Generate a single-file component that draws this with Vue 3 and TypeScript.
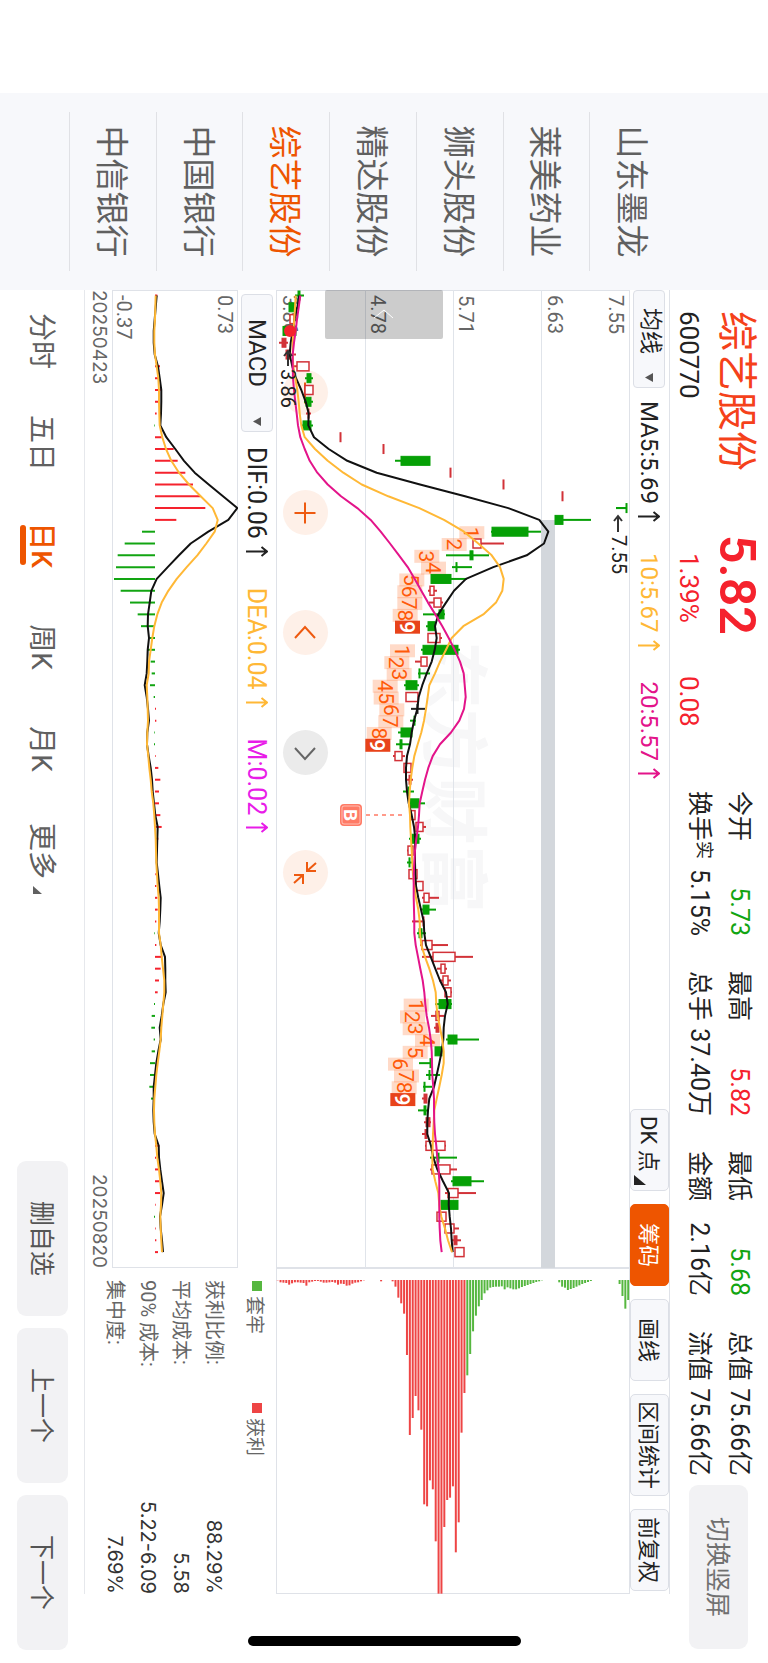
<script setup lang="ts">
import { ref } from 'vue'

type Kind = 'up' | 'solid' | 'down' | 'flat'
type Candle = [Kind, number, number, number, number]

const stocks = ['山东墨龙', '莱美药业', '狮头股份', '精达股份', '综艺股份', '中国银行', '中信银行']
const activeStock = ref('综艺股份')
const periods = ['分时', '五日', '日K', '周K', '月K', '更多']
const activePeriod = ref('日K')
const tools = ['DK 点', '筹码', '画线', '区间统计', '前复权']
const activeTool = ref('筹码')
const overlay = ref('均线')
const indicator = ref('MACD')

const quotes = [
  { label: '今开', value: '5.73', tone: 'fall' },
  { label: '最高', value: '5.82', tone: 'rise' },
  { label: '最低', value: '5.68', tone: 'fall' },
  { label: '总值', value: '75.66亿', tone: '' },
  { label: '换手', mark: '实', value: '5.15%', tone: '' },
  { label: '总手', value: '37.40万', tone: '' },
  { label: '金额', value: '2.16亿', tone: '' },
  { label: '流值', value: '75.66亿', tone: '' },
]
const averages = [
  { text: 'MA5:5.69', tone: 'ink' },
  { text: '10:5.67', tone: 'amber' },
  { text: '20:5.57', tone: 'pink' },
]
const macdValues = [
  { text: 'DIF:0.06', tone: 'ink' },
  { text: 'DEA:0.04', tone: 'amber' },
  { text: 'M:0.02', tone: 'violet' },
]
const chipStats = [
  ['获利比例:', '88.29%'],
  ['平均成本:', '5.58'],
  ['90% 成本:', '5.22-6.09'],
  ['集中度:', '7.69%'],
]
const priceLabels = [
  { text: '7.55', y: 21 },
  { text: '6.63', y: 82 },
  { text: '5.71', y: 171 },
  { text: '4.78', y: 259 },
  { text: '3.86', y: 347 },
]

// kind, body low, body high, shadow low, shadow high: heights above the price floor
const candles: Candle[] = [
  ['down', 22, 24, 19, 28], ['down', 13, 19, 13, 19], ['up', 14, 18, 14, 18], ['down', 7, 20, 7, 20],
  ['solid', 6, 10, 3, 12], ['solid', 10, 14, 9, 20], ['up', 21, 33, 18, 33], ['down', 31, 35, 29, 37],
  ['up', 29, 37, 29, 37], ['down', 30, 35, 28, 37], ['solid', 32, 33, 30, 35], ['down', 27, 35, 25, 37],
  ['solid', 64, 65, 64, 65], ['solid', 107, 108, 107, 108], ['down', 125, 154, 119, 154], ['solid', 174, 175, 174, 175],
  ['solid', 227, 228, 227, 228], ['solid', 286, 287, 286, 287], ['down', 350, 351, 340, 351], ['down', 279, 287, 279, 315],
  ['down', 216, 252, 215, 265], ['up', 197, 205, 197, 228], ['down', 194, 197, 170, 213], ['down', 180, 181, 176, 196],
  ['down', 155, 175, 155, 191], ['up', 154, 158, 152, 161], ['up', 158, 165, 153, 167], ['down', 163, 168, 147, 169],
  ['down', 152, 159, 150, 160], ['up', 152, 164, 152, 166], ['down', 147, 182, 145, 184], ['up', 145, 151, 139, 151],
  ['down', 143, 144, 142, 154], ['down', 130, 141, 128, 143], ['up', 130, 142, 130, 142], ['flat', 141, 142, 135, 149],
  ['down', 138, 139, 134, 140], ['down', 125, 136, 122, 136], ['down', 124, 126, 120, 133], ['up', 119, 126, 117, 129],
  ['up', 128, 135, 128, 135], ['solid', 133, 135, 131, 137], ['down', 132, 133, 127, 138], ['down', 134, 143, 134, 149],
  ['up', 135, 139, 135, 139], ['up', 140, 147, 140, 150], ['down', 136, 143, 133, 145], ['up', 132, 137, 131, 137],
  ['down', 133, 134, 131, 136], ['up', 133, 141, 133, 141], ['up', 140, 147, 140, 147], ['up', 148, 153, 146, 163],
  ['down', 147, 153, 145, 160], ['solid', 147, 148, 136, 148], ['down', 143, 146, 141, 150], ['up', 146, 156, 144, 172],
  ['up', 157, 179, 146, 197], ['up', 165, 169, 161, 171], ['up', 167, 172, 163, 175], ['up', 169, 175, 169, 176],
  ['down', 163, 175, 159, 176], ['up', 160, 163, 155, 168], ['solid', 160, 163, 158, 163], ['down', 172, 181, 170, 203],
  ['down', 159, 166, 159, 166], ['down', 154, 156, 143, 156], ['down', 153, 154, 150, 164], ['down', 148, 149, 147, 156],
  ['solid', 148, 151, 146, 151], ['down', 148, 150, 142, 152], ['solid', 150, 154, 148, 155], ['solid', 149, 151, 146, 152],
  ['up', 150, 169, 149, 170], ['down', 161, 163, 154, 181], ['up', 156, 174, 154, 181], ['down', 177, 195, 175, 208],
  ['up', 172, 182, 169, 200], ['down', 165, 182, 165, 182], ['up', 161, 170, 161, 170], ['up', 169, 178, 169, 183],
  ['solid', 178, 181, 176, 185], ['up', 179, 188, 179, 188],
]

// Line samples are kept on a scale of three units per pixel.
const ma5 = [
  118, 112, 104, 98, 92, 89, 97, 108, 124, 137, 146, 145, 162, 206, 262, 350, 480, 615, 745, 838, 865, 852, 800, 700, 618, 582, 558,
  535, 525, 530, 524, 515, 500, 487, 476, 472, 462, 455, 450, 441, 438, 438, 441, 446, 455, 462, 466, 465, 465, 466, 468, 475, 483,
  491, 493, 498, 512, 526, 540, 558, 563, 555, 551, 550, 545, 538, 530, 522, 508, 504, 502, 502, 513, 520, 532, 549, 567, 566, 569,
  573, 575, 578,
]
const ma10 = [
  107, 105, 103, 100, 98, 98, 100, 106, 112, 116, 119, 124, 134, 165, 203, 250, 305, 385, 478, 552, 612, 655, 695, 720, 731, 727, 708,
  670, 610, 575, 558, 540, 525, 508, 503, 498, 492, 484, 473, 463, 457, 452, 449, 447, 450, 451, 453, 455, 457, 459, 463, 468, 475,
  479, 480, 484, 495, 508, 519, 527, 529, 533, 540, 547, 551, 551, 545, 538, 530, 523, 521, 519, 518, 517, 518, 526, 535, 538, 544,
  555, 564, 576,
]
const ma20 = [
  121, 116, 111, 107, 102, 98, 98, 99, 102, 106, 110, 114, 121, 134, 149, 172, 203, 243, 292, 332, 362, 390, 417, 443, 464, 484, 504,
  526, 547, 566, 584, 600, 611, 614, 617, 612, 598, 573, 540, 518, 505, 495, 487, 479, 477, 474, 469, 465, 463, 461, 461, 461, 462,
  463, 463, 467, 474, 481, 488, 493, 496, 500, 507, 512, 515, 516, 517, 520, 522, 522, 523, 525, 529, 532, 536, 538, 538, 538, 538,
  539, 541, 545,
]
const dif = [
  468, 465, 462, 459, 459, 462, 472, 477, 482, 482, 481, 479, 497, 524, 550, 582, 624, 667, 710, 683, 623, 570, 535, 501, 468, 452, 447,
  442, 441, 445, 441, 440, 438, 432, 438, 442, 445, 440, 439, 444, 450, 454, 456, 460, 464, 471, 470, 469, 468, 472, 476, 480, 479,
  477, 474, 480, 493, 494, 494, 495, 488, 483, 477, 480, 473, 467, 463, 459, 459, 458, 459, 462, 474, 475, 479, 484, 489, 484, 478,
  480, 484, 487,
]
const dea = [
  465, 464, 463, 461, 461, 463, 468, 473, 475, 475, 476, 477, 485, 496, 512, 535, 565, 600, 636, 651, 642, 617, 590, 558, 528, 503, 483,
  470, 461, 455, 450, 445, 444, 438, 440, 441, 442, 440, 439, 443, 446, 450, 453, 458, 461, 463, 465, 466, 467, 469, 471, 474, 475,
  475, 475, 480, 483, 487, 491, 491, 488, 485, 482, 480, 476, 471, 467, 464, 461, 460, 461, 463, 467, 470, 475, 479, 482, 481, 479,
  480, 482, 484,
]
const histogram = [
  470, 463, 463, 463, 463, 463, 478, 474, 480, 473, 468, 461, 483, 519, 531, 554, 577, 600, 614, 527, 424, 372, 351, 346, 340, 360, 388,
  411, 421, 447, 442, 450, 453, 448, 459, 466, 467, 461, 460, 465, 473, 479, 475, 475, 479, 483, 473, 463, 463, 465, 467, 470, 471,
  467, 461, 467, 485, 480, 475, 471, 460, 453, 452, 459, 453, 448, 448, 446, 451, 463, 463, 463, 476, 466, 473, 476, 478, 465, 460,
  465, 467, 472,
]
const chips = [
  1, 7, 8, 9, 14, 10, 7, 7, 8, 9, 17, 7, 5, 3, 3, 5, 8, 8, 7, 6, 8, 14, 11, 12, 17, 16, 11, 8, 7, 4, 1, 0, 0, 0, 0, 0, 4, 0, 0, 0, 4,
  20, 53, 70, 101, 225, 465, 414, 348, 391, 449, 673, 679, 601, 628, 784, 941, 941, 741, 660, 653, 619, 817, 727, 458, 339, 286, 222,
  154, 107, 79, 60, 40, 31, 23, 21, 20, 20, 19, 28, 22, 25, 28, 28, 25, 21, 18, 15, 12, 9, 6, 4, 1, 0, 0, 0, 0, 0, 7, 20, 23, 30, 27,
  24, 20, 16, 12, 9, 6, 3, 0, 0, 0, 0, 0, 0, 0, 0, 0, 12, 48, 86, 60,
]
const countRuns = [
  { start: 20, levels: [598, 545, 463, 483, 418, 412, 412, 398, 405] },
  { start: 30, levels: [390, 373, 380, 338, 341, 358, 355, 320, 316] },
  { start: 60, levels: [431, 420, 428, 465, 428, 384, 402, 395, 391] },
]

const day = (i: number) => 5.5 + i * 11.81
const priceY = (v: number) => (1110 - v) / 3
const macdY = (v: number) => (712 - v) / 3
const line = (values: number[], scale: (v: number) => number) =>
  values.map((v, i) => `${day(i).toFixed(1)},${scale(v).toFixed(1)}`).join(' ')

const counts = countRuns.flatMap((run) =>
  run.levels.map((level, i) => ({ n: i + 1, x: day(run.start + i) + 1, y: priceY(level) })),
)
</script>

<template>
  <div class="screen">
    <div class="stage">
      <nav class="stocks" aria-label="自选股">
        <a
          v-for="s in stocks"
          :key="s"
          href="#"
          :class="{ active: s === activeStock }"
          @click.prevent="activeStock = s"
        >{{ s }}</a>
      </nav>

      <main class="main">
        <header class="header">
          <div class="title">
            <div class="title-row">
              <h1>综艺股份</h1>
              <strong>5.82</strong>
            </div>
            <div class="sub-row">
              <span class="code">600770</span>
              <span class="pct">1.39%</span>
              <span class="chg">0.08</span>
            </div>
          </div>
          <dl class="quotes">
            <div v-for="q in quotes" :key="q.label">
              <dt>{{ q.label }}<sup v-if="q.mark">{{ q.mark }}</sup></dt>
              <dd :class="q.tone">{{ q.value }}</dd>
            </div>
          </dl>
          <button type="button" class="flip">切换竖屏</button>
        </header>

        <section class="toolbar">
          <label class="picker">
            <select v-model="overlay" aria-label="主图指标">
              <option>均线</option>
              <option>BOLL</option>
            </select>
            <svg viewBox="0 0 9 8" width="9" height="8"><path d="M0 0H9L4.500 8Z" fill="#555" /></svg>
          </label>
          <span v-for="a in averages" :key="a.text" class="reading" :class="a.tone">
            {{ a.text }}
            <svg viewBox="0 0 11 22" width="11" height="22"><path d="M5.500 22V1M1 6.500L5.500 1L10 6.500" /></svg>
          </span>
          <div class="tools">
            <button
              v-for="t in tools"
              :key="t"
              type="button"
              :class="{ active: t === activeTool, menu: t === 'DK 点' }"
              @click="activeTool = t"
            >{{ t }}</button>
          </div>
        </section>

        <section class="panes price-panes">
          <div class="pane">
            <div class="controls">
              <button type="button" aria-label="缩小"><svg viewBox="-12 -12 24 24"><path d="M-10.500 0H10.500" /></svg></button>
              <button type="button" aria-label="放大"><svg viewBox="-12 -12 24 24"><path d="M-10.500 0H10.500M0 -10.500V10.500" /></svg></button>
              <button type="button" aria-label="左移"><svg viewBox="-12 -12 24 24"><path d="M5 -10L-6 0L5 10" /></svg></button>
              <button type="button" aria-label="右移" class="muted"><svg viewBox="-12 -12 24 24"><path d="M-5 -10L6 0L-5 10" /></svg></button>
              <button type="button" aria-label="还原"><svg viewBox="-12 -12 24 24"><path d="M-10 -11L-2 -2M-11 -2H-2V-11M10 11L2 2M11 2H2V11" /></svg></button>
            </div>
            <svg class="plot" viewBox="0 0 978 354">
              <text class="watermark" x="351" y="201">东方财富</text>
              <path class="grid" d="M0 88.500H978M0 176.500H978M0 264.500H978" />
              <rect x="230" y="75" width="748" height="14" fill="#d3d7dc" />
              <text v-for="p in priceLabels" :key="p.text" class="axis" x="5" :y="p.y">{{ p.text }}</text>

              <g v-for="c in counts" :key="c.x" class="count" :class="{ last: c.n === 9 }">
                <rect :x="c.x - 6.5" :y="c.y - 25" width="13" height="25" />
                <text :x="c.x" :y="c.y - 5">{{ c.n }}</text>
              </g>

              <g v-for="(c, i) in candles" :key="i" :class="c[0]">
                <path v-if="c[3] < c[1]" :d="`M${day(i)} ${354 - c[1]}V${354 - c[3]}`" />
                <path v-if="c[4] > c[2]" :d="`M${day(i)} ${354 - c[2]}V${354 - c[4]}`" />
                <rect :x="day(i) - 4.5" :y="354 - c[2]" width="9" :height="c[2] - c[1]" />
              </g>

              <polyline class="line ink" :points="line(ma5, priceY)" />
              <polyline class="line amber" :points="line(ma10, priceY)" />
              <polyline class="line pink" :points="line(ma20, priceY)" />

              <circle cx="41" cy="340" r="6" fill="#f5222d" />
              <path class="pointer" d="M61 342H76M66 338L61 342L66 346" />
              <text class="extreme" x="79" y="349">3.86</text>
              <path class="pointer" d="M226 12H242M231 8L226 12L231 16" />
              <text class="extreme" x="245" y="18">7.55</text>

              <path class="buy-line" d="M525 228V264" />
              <rect x="514" y="268" width="22" height="22" rx="4" fill="#ff7b66" />
              <rect x="516" y="270" width="18" height="18" rx="2" fill="none" stroke="#fff" stroke-opacity="0.5" />
              <text class="buy" x="525" y="286">B</text>

              <rect x="0" y="187" width="49" height="118" rx="2" fill="#000" fill-opacity="0.2" />
              <path d="M28 237L20 246L28 256" fill="none" stroke="#fff" />
            </svg>
          </div>
          <div class="pane chip-pane">
            <svg class="plot" viewBox="0 0 326 354">
              <rect
                v-for="(len, k) in chips"
                :key="k"
                x="12"
                :y="priceY(53 + k * 8.62) - 1"
                :width="len / 3"
                height="2"
                :fill="k < 66 ? '#ee4545' : '#56b740'"
              />
            </svg>
          </div>
        </section>

        <section class="macd-bar">
          <label class="picker wide">
            <select v-model="indicator" aria-label="副图指标">
              <option>MACD</option>
              <option>KDJ</option>
            </select>
            <svg viewBox="0 0 9 8" width="9" height="8"><path d="M0 0H9L4.500 8Z" fill="#555" /></svg>
          </label>
          <span v-for="a in macdValues" :key="a.text" class="reading" :class="a.tone">
            {{ a.text }}
            <svg viewBox="0 0 11 22" width="11" height="22"><path d="M5.500 22V1M1 6.500L5.500 1L10 6.500" /></svg>
          </span>
          <div class="legend">
            <span class="held">套牢</span>
            <span class="gain">获利</span>
          </div>
        </section>

        <section class="panes">
          <div>
            <div class="pane macd-pane">
              <svg class="plot" viewBox="0 0 978 126">
                <path
                  v-for="(v, i) in histogram"
                  :key="i"
                  :d="`M${day(i)} ${macdY(463)}V${macdY(v)}`"
                  :stroke="v > 463 ? '#f5222d' : '#12a512'"
                  stroke-width="2"
                />
                <polyline class="line ink" :points="line(dif, macdY)" />
                <polyline class="line amber" :points="line(dea, macdY)" />
                <text class="axis" x="5" y="20">0.73</text>
                <text class="axis" x="5" y="121">-0.37</text>
              </svg>
            </div>
            <div class="dates"><span>20250423</span><span>20250820</span></div>
          </div>
          <dl class="chip-stats">
            <div v-for="[label, value] in chipStats" :key="label">
              <dt>{{ label }}</dt>
              <dd>{{ value }}</dd>
            </div>
          </dl>
        </section>

        <footer class="footer">
          <div class="periods">
            <button
              v-for="p in periods"
              :key="p"
              type="button"
              :class="{ active: p === activePeriod, more: p === '更多' }"
              @click="activePeriod = p"
            >{{ p }}</button>
          </div>
          <div class="actions">
            <button type="button">删自选</button>
            <button type="button">上一个</button>
            <button type="button">下一个</button>
          </div>
        </footer>
      </main>
      <div class="home-bar"></div>
    </div>
  </div>
</template>

<style>
body {
  margin: 0;
  background: #fff;
}
</style>

<style scoped>
.screen {
  height: 100vh;
  overflow: hidden;
}
/* The whole page is laid out in landscape and turned a quarter clockwise. */
.stage {
  position: relative;
  box-sizing: border-box;
  display: grid;
  grid-template-columns: 197px 1fr;
  width: 100vh;
  height: 100vw;
  padding-left: 93px;
  transform: translateX(100vw) rotate(90deg);
  transform-origin: top left;
  font-family: Roboto, "Noto Sans CJK SC", sans-serif;
  font-size: 24px;
  color: #222;
  background: #fff;
}
.stage * {
  box-sizing: border-box;
}
button,
select {
  margin: 0;
  padding: 0;
  border: 0;
  background: none;
  font: inherit;
  color: inherit;
}
dl,
dd,
h1 {
  margin: 0;
}
svg {
  display: block;
}

.stocks {
  display: flex;
  flex-direction: column;
  padding: 92px 19px 69px;
  background: #f7f8fb;
}
.stocks a {
  flex: 1;
  display: flex;
  align-items: center;
  justify-content: center;
  padding-bottom: 2px;
  border-bottom: 1px solid #e0e1e5;
  font-size: 33px;
  color: #606060;
  text-decoration: none;
}
.stocks a.active {
  color: #ee5500;
}

.main {
  display: flex;
  flex-direction: column;
  min-width: 0;
}

.header {
  display: flex;
  height: 98px;
  padding: 0 14px 0 21px;
}
.title {
  flex: 1;
}
.title-row,
.sub-row {
  display: flex;
  align-items: center;
}
.title-row {
  height: 62px;
}
.title-row h1 {
  width: 224px;
  padding-bottom: 6px;
  font-size: 40px;
  font-weight: 400;
  color: #f5411a;
}
.title-row strong {
  font-size: 50px;
  font-weight: 600;
  color: #f5222d;
}
.sub-row {
  height: 34px;
  font-size: 26px;
  line-height: 34px;
}
.code {
  width: 242px;
}
.pct {
  width: 123px;
}
.pct,
.chg,
.rise {
  color: #f5222d;
}
.fall {
  color: #12a512;
}
.quotes {
  display: grid;
  grid-template-columns: repeat(4, 145px);
  grid-auto-rows: 40px;
  column-gap: 35px;
  padding-top: 9px;
  margin-right: 9px;
  font-size: 25px;
  line-height: 40px;
}
.quotes div {
  display: flex;
  justify-content: space-between;
}
.quotes dt {
  display: flex;
}
.quotes sup {
  font-size: 18px;
  line-height: 30px;
}
.flip {
  width: 164px;
  height: 59px;
  margin-top: 20px;
  padding-bottom: 4px;
  border-radius: 9px;
  background: #f2f2f4;
  font-size: 25px;
  color: #707070;
}

.toolbar {
  display: flex;
  align-items: center;
  height: 40px;
  margin-right: 69px;
  border-top: 1px solid #dfe2e8;
}
.picker {
  position: relative;
  width: 98px;
  height: 32px;
  margin-right: 13px;
}
.picker select {
  appearance: none;
  width: 100%;
  height: 100%;
  padding-left: 17px;
  padding-bottom: 3px;
  border: 1px solid #dcdfe6;
  border-radius: 4px;
  background: #f7f8fb;
  font-size: 23px;
}
.picker svg {
  position: absolute;
  right: 6px;
  top: 12px;
}
.picker.wide {
  width: 138px;
  margin-left: 4px;
  margin-right: 15px;
}
.picker.wide select {
  padding-left: 24px;
  padding-bottom: 0;
  font-size: 24px;
}
.reading {
  display: flex;
  align-items: center;
  gap: 7px;
  margin-right: 31px;
}
.reading svg {
  fill: none;
  stroke: currentColor;
  stroke-width: 2;
}
.ink {
  color: #222;
  stroke: #111;
}
.amber {
  color: #ffb836;
  stroke: #ffb836;
}
.pink {
  color: #e3148a;
  stroke: #e3148a;
}
.violet {
  color: #e81ce8;
}
.reading.ink,
.reading.amber,
.reading.pink {
  stroke: none;
}
.tools {
  display: flex;
  gap: 13px;
  margin-left: auto;
  margin-right: 3px;
}
.tools button {
  position: relative;
  min-width: 82px;
  height: 39px;
  padding: 0 6px 4px;
  border: 1px solid #dcdfe6;
  border-radius: 5px;
  background: #f7f8fb;
  font-size: 22px;
}
.tools button.active {
  border-color: #ee5500;
  background: #ee5500;
  color: #fff;
}
.tools button.menu {
  text-align: left;
}
.tools button.menu::after {
  content: "";
  position: absolute;
  right: 5px;
  bottom: 3px;
  border-left: 10px solid transparent;
  border-bottom: 12px solid #222;
}

.panes {
  display: grid;
  grid-template-columns: 978fr 326fr;
  margin-right: 69px;
}
.pane {
  position: relative;
  box-shadow: inset 0 0 0 1px #dfe2e8;
}
.plot {
  position: relative;
  width: 100%;
  height: auto;
  pointer-events: none;
}
.controls {
  position: absolute;
  left: 80px;
  top: 302px;
  display: flex;
  gap: 75px;
}
.controls button {
  display: grid;
  place-items: center;
  width: 45px;
  height: 45px;
  border-radius: 50%;
  background: #fef0e8;
  color: #ee5a10;
}
.controls .muted {
  background: #ebebeb;
  color: #666;
}
.controls svg {
  width: 24px;
  height: 24px;
  fill: none;
  stroke: currentColor;
  stroke-width: 2;
}
.watermark {
  font-size: 68px;
  font-weight: 700;
  fill: #f7f7f8;
}
.grid {
  stroke: #e0e4ea;
}
.axis {
  font-size: 20px;
  fill: #666;
}
.count rect {
  fill: #ff7b3a;
  fill-opacity: 0.28;
}
.count text {
  font-size: 21px;
  fill: #ff5a0a;
  text-anchor: middle;
}
.count.last rect {
  fill: #e8431a;
  fill-opacity: 1;
}
.count.last text {
  fill: #fff;
  font-weight: 600;
}
.up,
.solid {
  stroke: #d23238;
  fill: #fff;
}
.up rect {
  stroke-width: 1.5;
}
.solid {
  fill: #d23238;
}
.down {
  stroke: #06a006;
  fill: #06a006;
}
.flat {
  stroke: #222;
  fill: #222;
}
.up path,
.solid path,
.down path,
.flat path {
  stroke-width: 2;
}
.line {
  fill: none;
  stroke-width: 2;
  stroke-linejoin: round;
}
.pointer {
  fill: none;
  stroke: #333;
  stroke-width: 2;
}
.extreme {
  font-size: 20px;
  fill: #222;
}
.buy-line {
  stroke: #ff9a8a;
  stroke-width: 2;
  stroke-dasharray: 4 4;
}
.buy {
  font-size: 19px;
  font-weight: 700;
  fill: #fff;
  text-anchor: middle;
}

.macd-bar {
  display: flex;
  align-items: center;
  height: 38px;
  margin-right: 69px;
}
.macd-bar .reading {
  font-size: 25px;
}
.legend {
  display: flex;
  width: 313px;
  margin-left: auto;
  font-size: 19px;
  color: #666;
}
.legend span {
  display: flex;
  align-items: center;
  gap: 5px;
  width: 122px;
}
.legend span::before {
  content: "";
  width: 10px;
  height: 10px;
  background: #56b740;
}
.legend .gain::before {
  background: #ee4545;
}
.dates {
  display: flex;
  justify-content: space-between;
  height: 27px;
  font-family: Inter, sans-serif;
  font-size: 19px;
  line-height: 26px;
  color: #666;
}
.chip-stats {
  padding: 8px 0 0 12px;
  font-size: 20px;
  line-height: 33px;
}
.chip-stats div {
  display: flex;
  justify-content: space-between;
  height: 33px;
}
.chip-stats dt {
  color: #666;
}
.chip-stats dd {
  font-family: Inter, sans-serif;
  color: #333;
}
.chip-stats {
  height: 0;
}

.footer {
  position: relative;
  flex: 1;
  display: flex;
  align-items: center;
  justify-content: space-between;
  padding-right: 13px;
}
.footer::before {
  content: "";
  position: absolute;
  inset: 0 69px auto 0;
  border-top: 1px solid #e6e8ec;
}
.periods {
  display: flex;
  height: 100%;
}
.periods button {
  position: relative;
  width: 102px;
  padding-bottom: 4px;
  font-size: 28px;
  color: #606060;
}
.periods .active {
  font-weight: 500;
  color: #ee5500;
}
.periods .active::after {
  content: "";
  position: absolute;
  left: 31px;
  bottom: 20px;
  width: 40px;
  height: 6px;
  border-radius: 3px;
  background: #ee5500;
}
.periods .more::after {
  content: "";
  position: absolute;
  right: 8px;
  bottom: 33px;
  border-left: 8px solid transparent;
  border-bottom: 9px solid #606060;
}
.actions {
  display: flex;
  gap: 12px;
}
.actions button {
  width: 155px;
  height: 51px;
  padding-bottom: 4px;
  border-radius: 9px;
  background: #f2f2f4;
  font-size: 25px;
  color: #555;
}
.home-bar {
  position: absolute;
  right: 17px;
  top: 50%;
  width: 10px;
  height: 273px;
  margin-top: -137px;
  border-radius: 5px;
  background: #000;
}
</style>
